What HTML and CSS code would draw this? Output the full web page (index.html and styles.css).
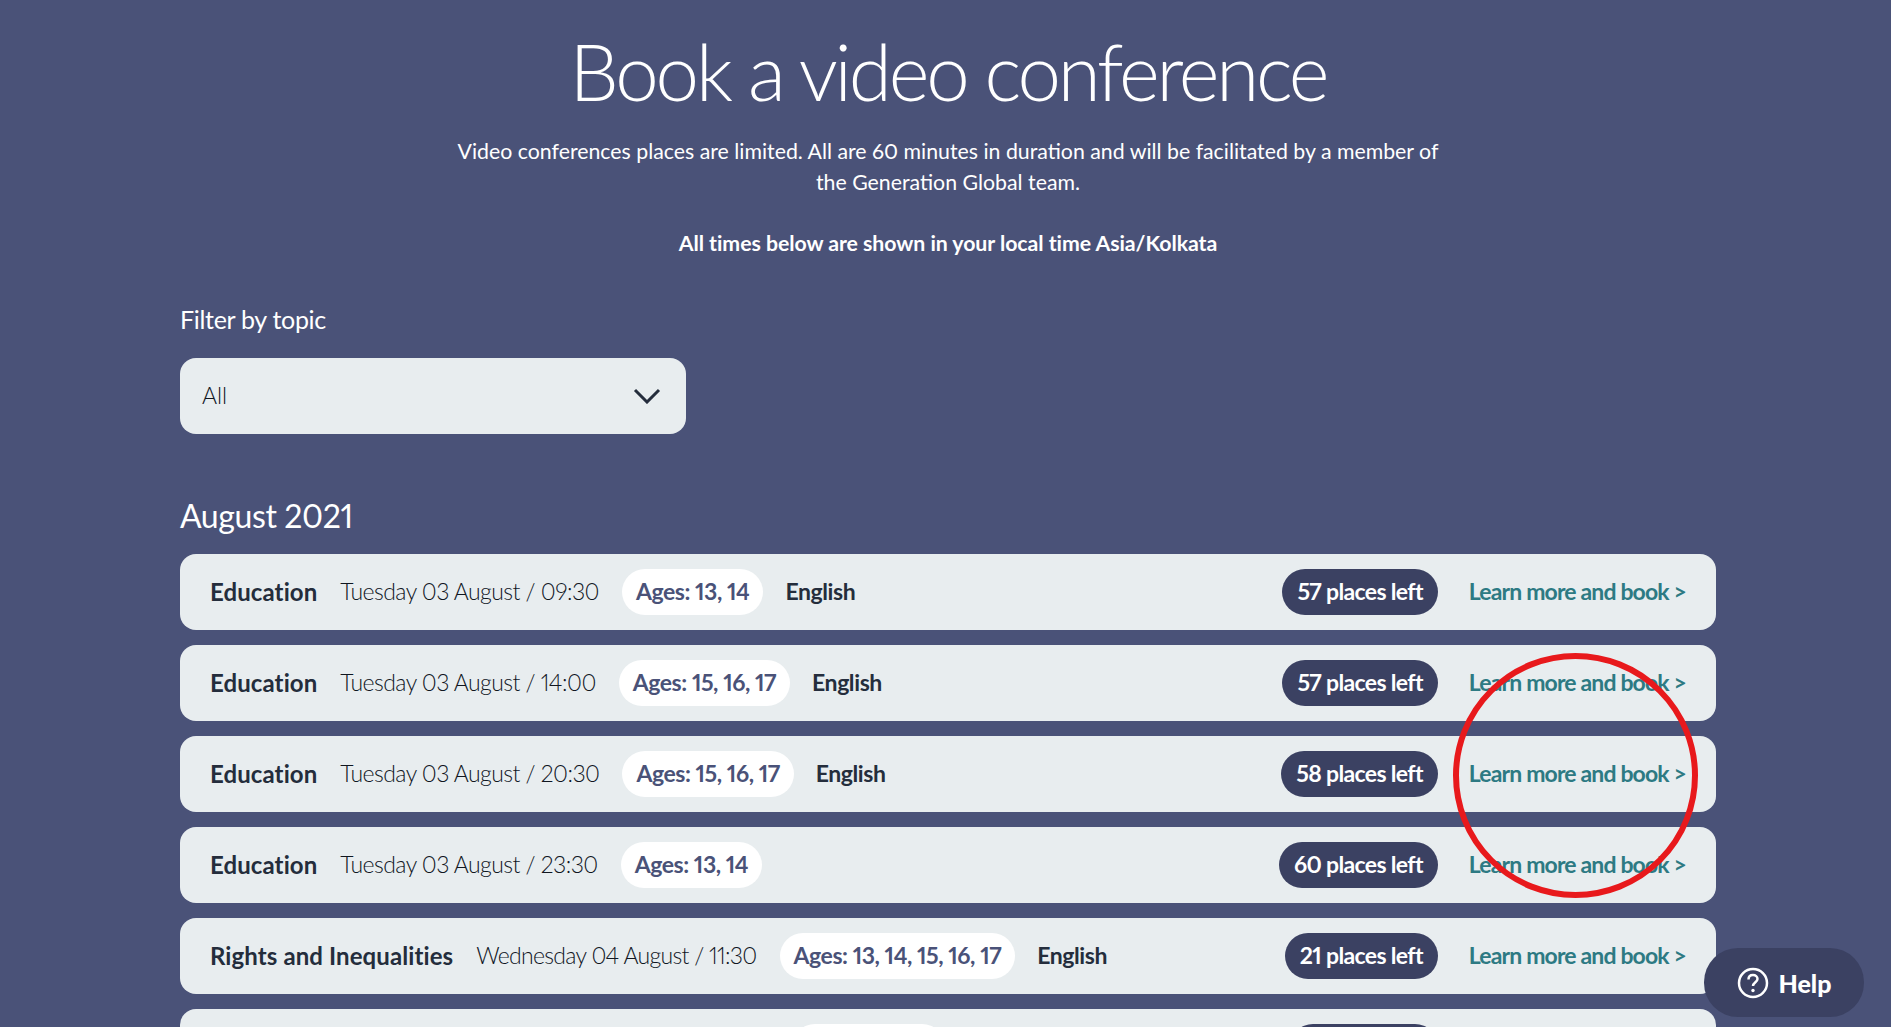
FILE: index.html
```html
<!DOCTYPE html>
<html lang="en">
<head>
<meta charset="UTF-8">
<meta name="viewport" content="width=device-width, initial-scale=1.0">
<title>Book a video conference</title>
<link rel="stylesheet" href="styles.css">
</head>
<body>
  <main class="container">
    <div class="intro">
      <h1>Book a video conference</h1>
      <p>Video conferences places are limited. All are 60 minutes in duration and will be facilitated by a member of the Generation Global team.</p>
      <p class="local-time">All times below are shown in your local time Asia/Kolkata</p>
    </div>

    <label class="filter-label" for="topic">Filter by topic</label>
    <div class="select" id="topic">
      <span>All</span>
      <svg width="28" height="16" viewBox="0 0 28 16"><path d="M2 2 L14 14 L26 2" fill="none" stroke="#242d3c" stroke-width="3"/></svg>
    </div>

    <h2>August 2021</h2>
    <div class="sessions">
      <div class="session">
        <span class="topic">Education</span>
        <span class="date">Tuesday 03 August / 09:30</span>
        <span class="ages">Ages: 13, 14</span>
        <span class="lang">English</span>
        <span class="places">57 places left</span>
        <a class="book" href="#">Learn more and book &gt;</a>
      </div>
      <div class="session">
        <span class="topic">Education</span>
        <span class="date">Tuesday 03 August / 14:00</span>
        <span class="ages">Ages: 15, 16, 17</span>
        <span class="lang">English</span>
        <span class="places">57 places left</span>
        <a class="book" href="#">Learn more and book &gt;</a>
      </div>
      <div class="session">
        <span class="topic">Education</span>
        <span class="date">Tuesday 03 August / 20:30</span>
        <span class="ages">Ages: 15, 16, 17</span>
        <span class="lang">English</span>
        <span class="places">58 places left</span>
        <a class="book" href="#">Learn more and book &gt;</a>
      </div>
      <div class="session">
        <span class="topic">Education</span>
        <span class="date">Tuesday 03 August / 23:30</span>
        <span class="ages">Ages: 13, 14</span>
        <span class="places">60 places left</span>
        <a class="book" href="#">Learn more and book &gt;</a>
      </div>
      <div class="session">
        <span class="topic">Rights and Inequalities</span>
        <span class="date date-long">Wednesday 04 August / 11:30</span>
        <span class="ages">Ages: 13, 14, 15, 16, 17</span>
        <span class="lang">English</span>
        <span class="places">21 places left</span>
        <a class="book" href="#">Learn more and book &gt;</a>
      </div>
      <!-- only the top of this row is on screen, its text is below the fold -->
      <div class="session session-cut">
        <span class="ages"></span>
        <span class="places"></span>
      </div>
    </div>
  </main>

  <div class="annotation"></div>

  <button class="help">
    <svg width="32" height="32" viewBox="0 0 32 32">
      <circle cx="16" cy="16" r="14" fill="none" stroke="#fff" stroke-width="2.5"/>
      <path d="M11.5 12.5 C11.5 9.5 13.5 8 16 8 C18.5 8 20.5 9.7 20.5 12 C20.5 15 16 15.5 16 19" fill="none" stroke="#fff" stroke-width="2.5"/>
      <circle cx="16" cy="23.5" r="1.7" fill="#fff"/>
    </svg>
    Help
  </button>
</body>
</html>
```

FILE: styles.css
```css
html, body {
  height: 100%;
  overflow: hidden;
}

body {
  font-family: Lato, "Open Sans", sans-serif;
  font-variant-numeric: proportional-nums;
  margin: 0;
  background-color: #4a5278;
  color: #fff;
}

.container {
  width: 1536px;
  margin-left: 180px;
  padding-top: 27px;
}

.intro {
  text-align: center;
}

h1 {
  font-size: 78px;
  font-weight: 300;
  line-height: 88px;
  margin: 0 0 21px;
  letter-spacing: -3.15px;
}

.intro p {
  width: 1000px;
  margin: 0 auto 30px;
  font-size: 21.3px;
  line-height: 31px;
}

.intro .local-time {
  font-weight: 700;
  letter-spacing: -0.05px;
  margin-bottom: 0;
}

.filter-label {
  display: block;
  margin-top: 45px;
  font-size: 25px;
  line-height: 30px;
  letter-spacing: -0.3px;
}

.select {
  display: flex;
  justify-content: space-between;
  align-items: center;
  box-sizing: border-box;
  width: 506px;
  height: 76px;
  margin-top: 24px;
  padding: 0 25px 0 22px;
  border-radius: 16px;
  background-color: #e8edef;
  color: #10161f;
  font-size: 23px;
  font-weight: 300;
}

.select span {
  margin-bottom: 2px;
}

h2 {
  font-size: 32px;
  font-weight: 400;
  line-height: 40px;
  margin: 62px 0 18px;
  letter-spacing: -0.4px;
}

.sessions {
  display: flex;
  flex-direction: column;
  gap: 15px;
}

.session {
  display: flex;
  align-items: center;
  gap: 23px;
  height: 76px;
  box-sizing: border-box;
  padding: 0 30px;
  border-radius: 16px;
  background-color: #e8edef;
  color: #242d3c;
  font-size: 23px;
  white-space: nowrap;
}

.topic {
  font-size: 24px;
  font-weight: 700;
  letter-spacing: 0.1px;
  margin-bottom: 2px;
}

.date {
  font-weight: 300;
  letter-spacing: -0.55px;
  color: #10161f;
  margin-bottom: 2px;
}

.date-long {
  letter-spacing: -0.7px;
}

.ages {
  padding: 0 14px 2px;
  line-height: 44px;
  border-radius: 23px;
  background-color: #fff;
  color: #4a5278;
  font-weight: 700;
  letter-spacing: -0.45px;
}

.lang {
  font-weight: 700;
  letter-spacing: -0.4px;
  margin-left: -1px;
  margin-bottom: 2px;
}

.places {
  margin-left: auto;
  margin-right: 8px;
  padding: 0 15px 2px;
  line-height: 44px;
  border-radius: 23px;
  background-color: #3b4162;
  color: #fff;
  font-weight: 700;
  letter-spacing: -0.65px;
}

.book {
  color: #2d7a83;
  font-weight: 700;
  text-decoration: none;
  letter-spacing: -0.85px;
  margin-bottom: 2px;
}

.session-cut .ages {
  margin-left: 582px;
  width: 125px;
  height: 44px;
}

.session-cut .places {
  margin-right: 248px;
  width: 118px;
  height: 44px;
}

.annotation {
  position: absolute;
  left: 1453px;
  top: 653px;
  width: 245px;
  height: 245px;
  box-sizing: border-box;
  border: 6px solid #e8191c;
  border-radius: 50%;
}

.help {
  position: absolute;
  left: 1704px;
  top: 948px;
  display: flex;
  align-items: center;
  justify-content: center;
  gap: 10px;
  width: 160px;
  height: 69px;
  border: none;
  border-radius: 34px;
  background-color: #3b4162;
  color: #fff;
  font-family: Lato, sans-serif;
  font-size: 25px;
  font-weight: 900;
}
```
